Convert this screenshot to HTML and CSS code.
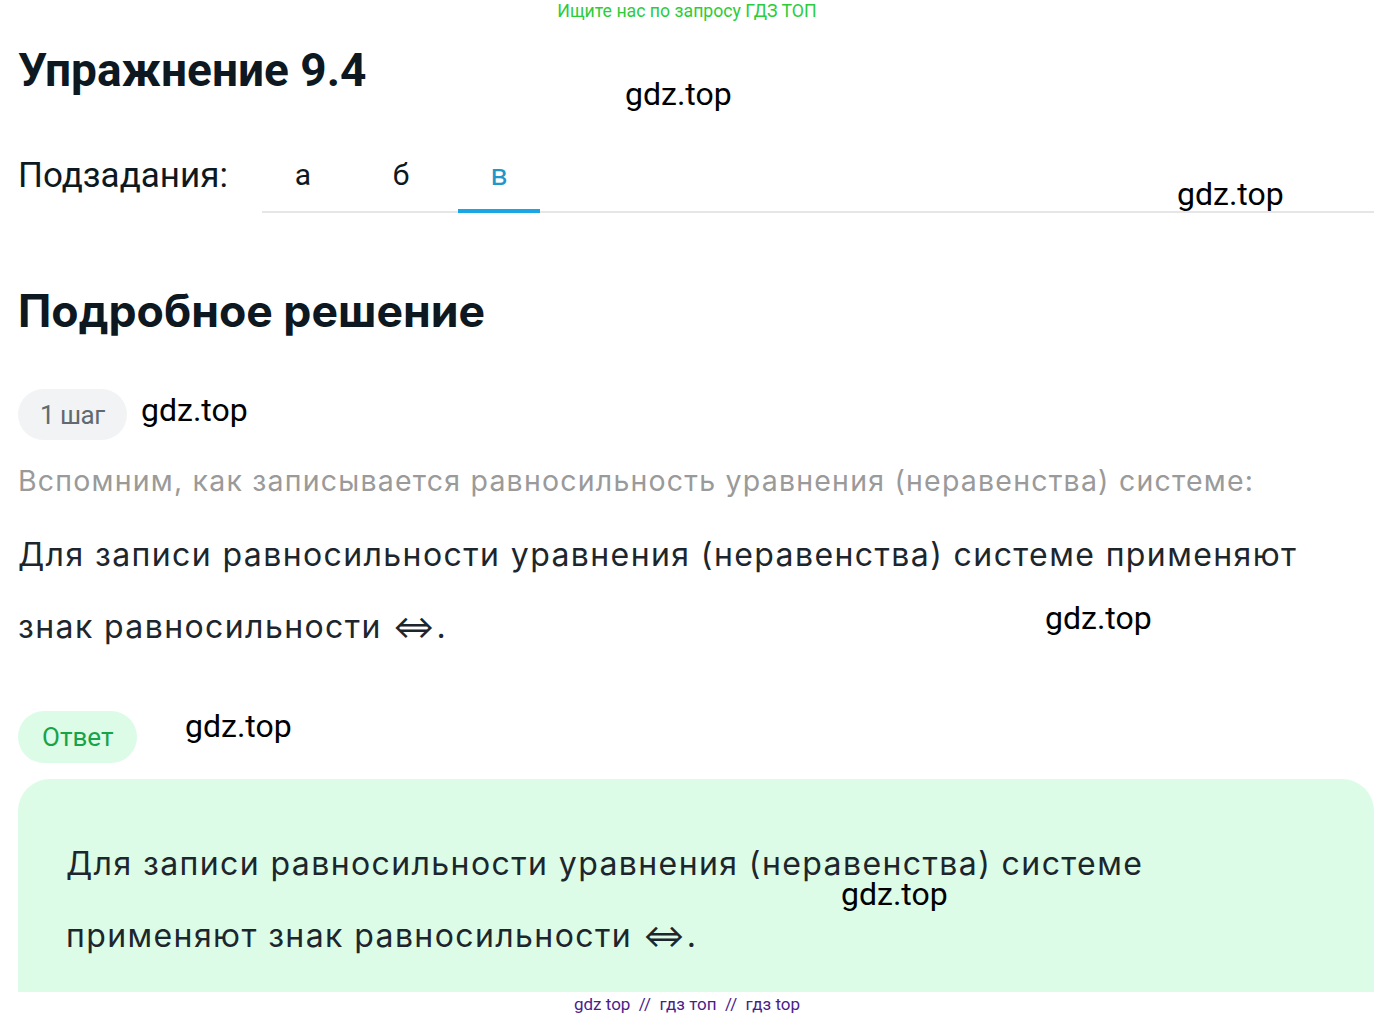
FILE: index.html
```html
<!DOCTYPE html>
<html lang="ru">
<head>
    <meta charset="UTF-8">
    <meta name="viewport" content="width=device-width, initial-scale=1.0">
    <title>Упражнение 9.4</title>
    <link rel="stylesheet" href="styles.css">
</head>
<body>
    <div class="top-hint">Ищите нас по запросу ГДЗ ТОП</div>

    <div class="page">
        <h1 class="title">Упражнение 9.4</h1>

        <div class="subtasks">
            <div class="subtasks-label">Подзадания:</div>
            <div class="tabs">
                <div class="tab">а</div>
                <div class="tab">б</div>
                <div class="tab active">в</div>
            </div>
        </div>

        <h2 class="section-title">Подробное решение</h2>

        <div class="step">
            <span class="pill pill-step">1 шаг</span>
        </div>
        <p class="hint">Вспомним, как записывается равносильность уравнения (неравенства) системе:</p>
        <p class="text">Для записи равносильности уравнения (неравенства) системе применяют знак равносильности ⇔.</p>

        <div class="step answer-step">
            <span class="pill pill-answer">Ответ</span>
        </div>
        <div class="answer-box">
            <p class="text">Для записи равносильности уравнения (неравенства) системе применяют знак равносильности ⇔.</p>
        </div>
    </div>

    <span class="mark" style="left: 625px; top: 76px;">gdz.top</span>
    <span class="mark" style="left: 1177px; top: 176px;">gdz.top</span>
    <span class="mark" style="left: 141px; top: 392px;">gdz.top</span>
    <span class="mark" style="left: 1045px; top: 600px;">gdz.top</span>
    <span class="mark" style="left: 185px; top: 708px;">gdz.top</span>
    <span class="mark" style="left: 841px; top: 876px;">gdz.top</span>

    <div class="footer">gdz top&nbsp; //&nbsp; гдз топ&nbsp; //&nbsp; гдз top</div>
</body>
</html>
```

FILE: styles.css
```css
body {
    position: relative;
    margin: 0;
    font-family: Inter, "Noto Sans", sans-serif;
    color: #1d262d;
    background: #fff;
    overflow: hidden;
}
.top-hint {
    font-family: Roboto, sans-serif;
    font-size: 17.7px;
    line-height: 22px;
    color: #2ccc3a;
    text-align: center;
}
.page {
    padding-left: 18px;
}
.title {
    font-family: Roboto, sans-serif;
    font-weight: 700;
    font-size: 46px;
    line-height: 56px;
    color: #0d1821;
    margin: 20px 0 0;
}
.subtasks {
    display: flex;
    align-items: flex-end;
    margin-top: 57px;
}
.subtasks-label {
    font-family: Roboto, sans-serif;
    font-size: 35px;
    line-height: 40px;
    color: #0d1821;
    width: 244px;
    padding-bottom: 17px;
}
.tabs {
    flex: 1;
    display: flex;
    gap: 16px;
    border-bottom: 2px solid #e6e6e6;
}
.tab {
    width: 82px;
    text-align: center;
    font-family: Roboto, sans-serif;
    font-size: 30px;
    line-height: 40px;
    padding-bottom: 14px;
    color: #0d1821;
    border-bottom: 4px solid transparent;
    margin-bottom: -2px;
}
.tab.active {
    color: #2196c9;
    border-bottom-color: #1aa6e4;
}
.section-title {
    font-weight: 700;
    font-size: 44.6px;
    line-height: 56px;
    color: #0d1821;
    margin: 70px 0 0;
}
.step {
    margin-top: 50px;
    display: flex;
}
.pill {
    display: inline-block;
    border-radius: 26px;
    height: 51px;
    line-height: 53px;
    font-size: 26px;
}
.pill-step {
    background: #f1f3f4;
    color: #606a70;
    padding: 0 22px;
    font-family: Roboto, sans-serif;
    letter-spacing: -0.5px;
}
.hint {
    font-size: 28.5px;
    letter-spacing: 1.2px;
    line-height: 40px;
    color: #9a9a9a;
    margin: 21px 0 0;
}
.text {
    font-size: 32px;
    letter-spacing: 1.4px;
    line-height: 72px;
    margin: 18px 0 0;
    color: #1d262d;
}
.answer-step {
    margin-top: 48px;
}
.pill-answer {
    background: #dcfce7;
    color: #16a34a;
    padding: 0 24px;
    height: 52px;
    font-family: Roboto, sans-serif;
}
.answer-box {
    margin-top: 16px;
    background: #dcfce7;
    border-radius: 32px 32px 0 0;
    padding: 49px 48px 60px;
}
.answer-box .text {
    margin: 0;
}
.mark {
    position: absolute;
    font-family: Roboto, sans-serif;
    font-size: 32px;
    line-height: 36px;
    color: #000;
}
.footer {
    position: fixed;
    left: 0;
    right: 0;
    bottom: 0;
    height: 27px;
    background: #fff;
    text-align: center;
    font-family: Roboto, sans-serif;
    font-size: 17px;
    line-height: 24px;
    color: #4b1d8a;
}
```
